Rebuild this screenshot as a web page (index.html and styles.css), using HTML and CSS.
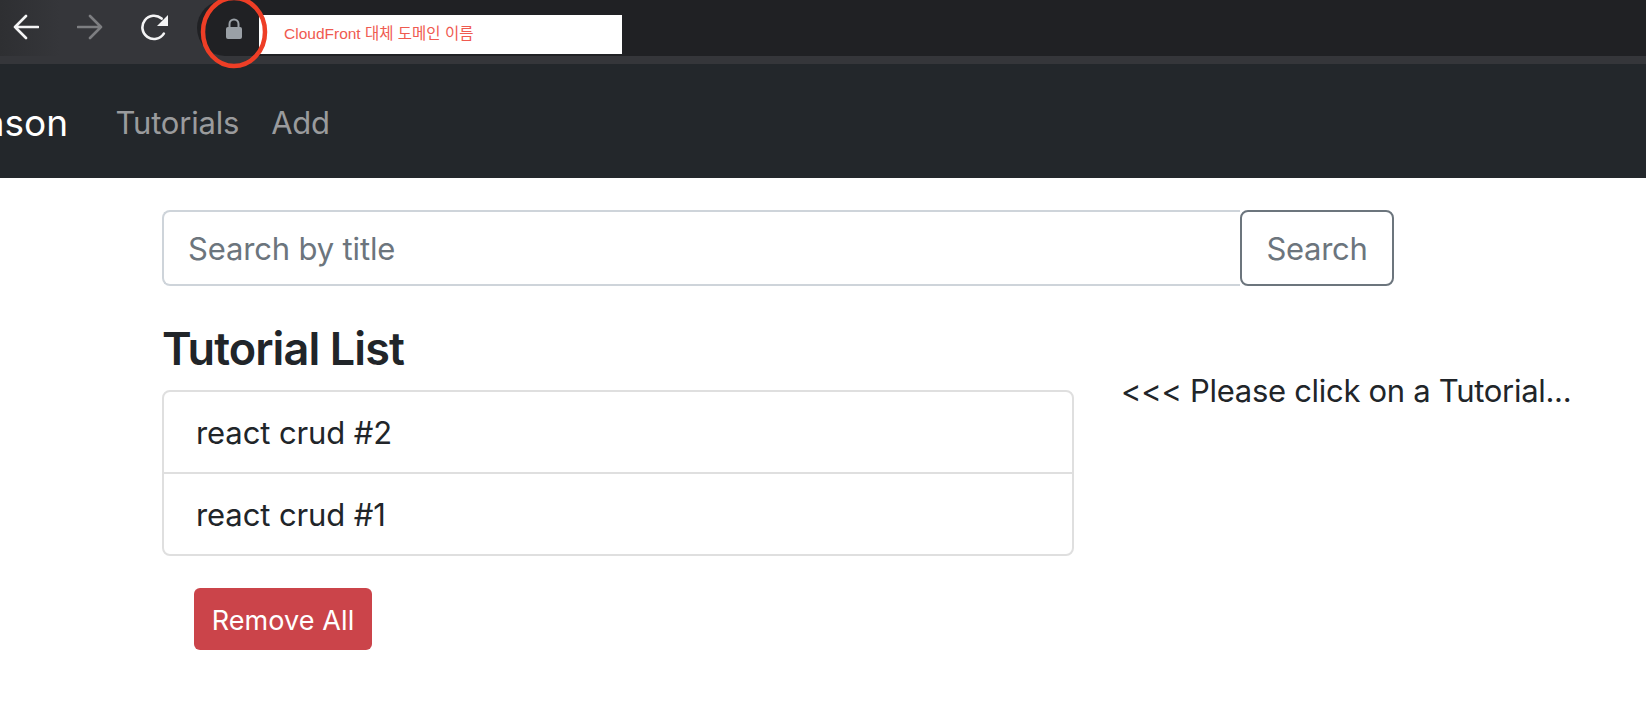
FILE: index.html
```html
<!DOCTYPE html>
<html lang="en">
<head>
    <meta charset="UTF-8">
    <meta name="viewport" content="width=device-width, initial-scale=1.0">
    <title>Tutorials</title>
    <link rel="stylesheet" href="styles.css">
</head>
<body>
    <!-- Browser toolbar -->
    <div class="toolbar">
        <div class="nav-icons">
            <svg class="icon" viewBox="0 0 26 26"><path d="M25 13H2M13 2 2 13l11 11" fill="none" stroke="#f4f4f5" stroke-width="2.6" stroke-linecap="round" stroke-linejoin="round"/></svg>
            <svg class="icon" viewBox="0 0 26 26"><path d="M1 13h23M13 2l11 11-11 11" fill="none" stroke="#7d7e81" stroke-width="2.6" stroke-linecap="round" stroke-linejoin="round"/></svg>
            <svg class="icon icon-reload" viewBox="0 0 28 28"><path d="M22.8 19.6A11.6 11.6 0 1 1 20.6 4.6" fill="none" stroke="#f4f4f5" stroke-width="2.6" stroke-linecap="round"/><path d="M27 1v11H16z" fill="#f4f4f5"/></svg>
        </div>
        <div class="address-bar">
            <svg class="lock" viewBox="0 0 16 21"><path d="M3.5 10V6a4.5 4.5 0 0 1 9 0v4" fill="none" stroke="#9aa0a6" stroke-width="2"/><rect x="0" y="9" width="16" height="12" rx="2" fill="#9aa0a6"/></svg>
            <div class="annotation">CloudFront 대체 도메인 이름</div>
        </div>
        <svg class="circle" viewBox="0 0 72 80"><ellipse cx="36" cy="36" rx="31" ry="34" fill="none" stroke="#ee3e26" stroke-width="4.5"/></svg>
    </div>

    <!-- Navbar -->
    <nav class="navbar">
        <div class="brand"><span>Jason</span></div>
        <a class="nav-link" href="#">Tutorials</a>
        <a class="nav-link" href="#">Add</a>
    </nav>

    <div class="container">
        <div class="search-row">
            <input class="search-input" type="text" placeholder="Search by title">
            <button class="search-btn">Search</button>
        </div>

        <div class="columns">
            <div class="list-col">
                <h4>Tutorial List</h4>
                <ul class="list-group">
                    <li class="list-item">react crud #2</li>
                    <li class="list-item">react crud #1</li>
                </ul>
                <button class="remove-btn">Remove All</button>
            </div>
            <div class="detail-col">
                <p>&lt;&lt;&lt; Please click on a Tutorial...</p>
            </div>
        </div>
    </div>
</body>
</html>
```

FILE: styles.css
```css
body {
    font-family: Inter, "Noto Sans", sans-serif;
    margin: 0;
    padding: 0;
    background-color: #fff;
    color: #212529;
    overflow: hidden;
}
.toolbar {
    position: relative;
    display: flex;
    height: 56px;
    border-bottom: 8px solid #35363a;
    background: linear-gradient(90deg, #2e2f32, #35363a 60px);
}
.nav-icons {
    display: flex;
    align-items: center;
    gap: 38px;
    width: 197px;
    padding: 0 0 2px 13px;
    box-sizing: border-box;
}
.icon {
    width: 26px;
    height: 26px;
    flex: none;
}
.icon-reload {
    width: 28px;
    height: 28px;
    margin-top: 2px;
}
.address-bar {
    flex: 1;
    display: flex;
    align-items: flex-start;
    background-color: #202124;
    border-radius: 28px 0 0 28px;
}
.lock {
    width: 16px;
    height: 21px;
    margin: 18px 0 0 29px;
}
.annotation {
    width: 363px;
    height: 39px;
    margin: 15px 0 0 17px;
    padding-left: 25px;
    box-sizing: border-box;
    background-color: #fff;
    color: #ef5a50;
    font-family: "Liberation Sans", "Noto Sans CJK KR", sans-serif;
    font-size: 15.5px;
    line-height: 38px;
}
.circle {
    position: absolute;
    left: 198px;
    top: -4px;
    width: 72px;
    height: 80px;
}
.navbar {
    display: flex;
    align-items: center;
    height: 114px;
    padding-top: 2px;
    box-sizing: border-box;
    background-color: #23272b;
}
.brand {
    width: 68px;
    display: flex;
    justify-content: flex-end;
    overflow: hidden;
    margin-right: 31.5px;
    color: #fff;
    font-size: 37px;
}
.brand span {
    flex: none;
}
.nav-link {
    padding: 0 16px;
    color: #9a9b9d;
    font-size: 31px;
    letter-spacing: -0.2px;
    text-decoration: none;
}
.container {
    padding: 32px 0 0 162px;
}
.search-row {
    display: flex;
    width: 1232px;
    height: 76px;
}
.search-input {
    flex: 1;
    min-width: 0;
    padding: 0 24px;
    font-family: inherit;
    font-size: 31px;
    letter-spacing: -0.15px;
    border: 2px solid #ced4da;
    border-right: none;
    border-radius: 8px 0 0 8px;
    outline: none;
}
.search-input::placeholder {
    color: #6c757d;
    opacity: 1;
}
.search-btn {
    width: 154px;
    padding: 0;
    font-family: inherit;
    font-size: 31px;
    letter-spacing: -0.3px;
    color: #6c757d;
    background-color: #fff;
    border: 2px solid #6c757d;
    border-radius: 8px;
}
.columns {
    display: flex;
    gap: 47px;
}
.list-col {
    width: 912px;
}
h4 {
    margin: 34px 0 13px;
    font-size: 45px;
    font-weight: 600;
    letter-spacing: -0.9px;
    line-height: 57px;
}
.list-group {
    list-style: none;
    margin: 0;
    padding: 0;
    border: 2px solid #dfdfdf;
    border-radius: 8px;
}
.list-item {
    height: 80px;
    padding-left: 32px;
    font-size: 31px;
    letter-spacing: -0.1px;
    line-height: 82px;
}
.list-item + .list-item {
    border-top: 2px solid #dfdfdf;
}
.remove-btn {
    display: block;
    width: 178px;
    height: 62px;
    margin: 32px 0 0 32px;
    padding: 2px 0 0;
    font-family: inherit;
    font-size: 27px;
    letter-spacing: 0.1px;
    color: #fff;
    background-color: #cb444a;
    border: none;
    border-radius: 6px;
}
.detail-col p {
    margin: 81px 0 0;
    font-size: 31px;
    letter-spacing: -0.3px;
    line-height: 47px;
    white-space: nowrap;
}
```
